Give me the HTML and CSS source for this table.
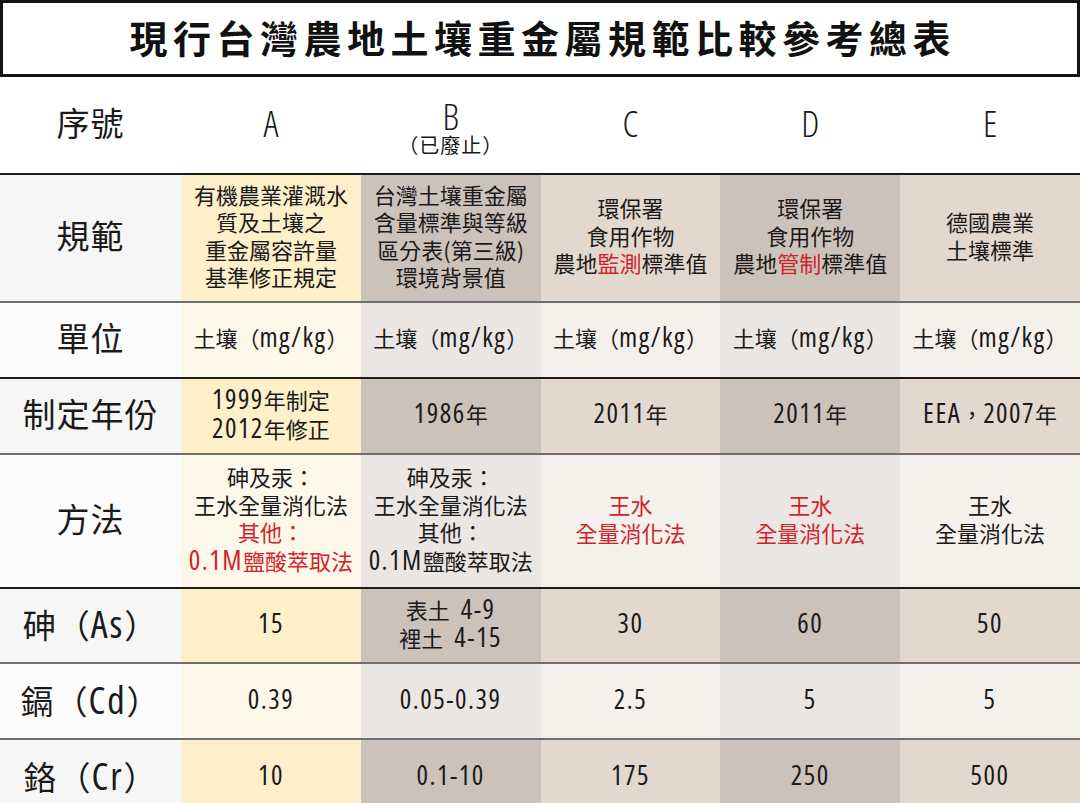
FILE: index.html
```html
<!DOCTYPE html>
<html lang="zh-Hant">
<head>
<meta charset="utf-8">
<title>現行台灣農地土壤重金屬規範比較參考總表</title>
<link rel="stylesheet" href="styles.css">
</head>
<body>
<div class="page">
  <h1 class="title">現行台灣農地土壤重金屬規範比較參考總表</h1>

  <div class="table">
    <div class="row head">
      <div class="cell label"><p class="txt">序號</p></div>
      <div class="cell col-a"><span class="letter">A</span></div>
      <div class="cell col-b stack"><span class="letter">B</span><span class="note">（已廢止）</span></div>
      <div class="cell col-c"><span class="letter">C</span></div>
      <div class="cell col-d"><span class="letter">D</span></div>
      <div class="cell col-e"><span class="letter">E</span></div>
    </div>

    <div class="row shade line-dark r-spec">
      <div class="cell label"><p class="txt">規範</p></div>
      <div class="cell col-a"><p class="txt">有機農業灌溉水<br>質及土壤之<br>重金屬容許量<br>基準修正規定</p></div>
      <div class="cell col-b"><p class="txt">台灣土壤重金屬<br>含量標準與等級<br>區分表(第三級)<br>環境背景值</p></div>
      <div class="cell col-c"><p class="txt">環保署<br>食用作物<br>農地<span class="red">監測</span>標準值</p></div>
      <div class="cell col-d"><p class="txt">環保署<br>食用作物<br>農地<span class="red">管制</span>標準值</p></div>
      <div class="cell col-e"><p class="txt">德國農業<br>土壤標準</p></div>
    </div>

    <div class="row light line-gray r-unit">
      <div class="cell label"><p class="txt">單位</p></div>
      <div class="cell col-a"><p class="txt">土壤（<span class="lat">mg/kg</span>）</p></div>
      <div class="cell col-b"><p class="txt">土壤（<span class="lat">mg/kg</span>）</p></div>
      <div class="cell col-c"><p class="txt">土壤（<span class="lat">mg/kg</span>）</p></div>
      <div class="cell col-d"><p class="txt">土壤（<span class="lat">mg/kg</span>）</p></div>
      <div class="cell col-e"><p class="txt">土壤（<span class="lat">mg/kg</span>）</p></div>
    </div>

    <div class="row shade line-dark r-year">
      <div class="cell label"><p class="txt">制定年份</p></div>
      <div class="cell col-a"><p class="txt"><span class="lat">1999</span>年制定<br><span class="lat">2012</span>年修正</p></div>
      <div class="cell col-b"><p class="txt"><span class="lat">1986</span>年</p></div>
      <div class="cell col-c"><p class="txt"><span class="lat">2011</span>年</p></div>
      <div class="cell col-d"><p class="txt"><span class="lat">2011</span>年</p></div>
      <div class="cell col-e"><p class="txt"><span class="lat">EEA</span>，<span class="lat">2007</span>年</p></div>
    </div>

    <div class="row light line-gray r-method">
      <div class="cell label"><p class="txt">方法</p></div>
      <div class="cell col-a"><p class="txt">砷及汞：<br>王水全量消化法<br><span class="red">其他：<br><span class="lat">0.1M</span>鹽酸萃取法</span></p></div>
      <div class="cell col-b"><p class="txt">砷及汞：<br>王水全量消化法<br>其他：<br><span class="lat">0.1M</span>鹽酸萃取法</p></div>
      <div class="cell col-c"><p class="txt red">王水<br>全量消化法</p></div>
      <div class="cell col-d"><p class="txt red">王水<br>全量消化法</p></div>
      <div class="cell col-e"><p class="txt">王水<br>全量消化法</p></div>
    </div>

    <div class="row shade line-dark r-as">
      <div class="cell label"><p class="txt">砷（<span class="lat2">As</span>）</p></div>
      <div class="cell col-a"><p class="txt lat">15</p></div>
      <div class="cell col-b"><p class="txt">表土&ensp;<span class="lat">4-9</span><br>裡土&ensp;<span class="lat">4-15</span></p></div>
      <div class="cell col-c"><p class="txt lat">30</p></div>
      <div class="cell col-d"><p class="txt lat">60</p></div>
      <div class="cell col-e"><p class="txt lat">50</p></div>
    </div>

    <div class="row light line-gray r-cd">
      <div class="cell label"><p class="txt">鎘（<span class="lat2">Cd</span>）</p></div>
      <div class="cell col-a"><p class="txt lat">0.39</p></div>
      <div class="cell col-b"><p class="txt lat">0.05-0.39</p></div>
      <div class="cell col-c"><p class="txt lat">2.5</p></div>
      <div class="cell col-d"><p class="txt lat">5</p></div>
      <div class="cell col-e"><p class="txt lat">5</p></div>
    </div>

    <div class="row shade line-gray r-cr">
      <div class="cell label"><p class="txt">鉻（<span class="lat2">Cr</span>）</p></div>
      <div class="cell col-a"><p class="txt lat">10</p></div>
      <div class="cell col-b"><p class="txt lat">0.1-10</p></div>
      <div class="cell col-c"><p class="txt lat">175</p></div>
      <div class="cell col-d"><p class="txt lat">250</p></div>
      <div class="cell col-e"><p class="txt lat">500</p></div>
    </div>
  </div>
</div>
</body>
</html>
```

FILE: styles.css
```css
html, body {
  margin: 0;
  padding: 0;
  overflow: hidden;
  background: #ffffff;
}

body {
  font-family: "Noto Sans CJK TC", "Noto Sans CJK JP", sans-serif;
  color: #1a1a1a;
}

.page {
  width: 1080px;
}

.title {
  box-sizing: border-box;
  height: 77px;
  margin: 0;
  padding-bottom: 3px;
  border: 3px solid #141414;
  display: flex;
  align-items: center;
  justify-content: center;
  font-size: 38px;
  font-weight: 700;
  letter-spacing: 5.5px;
  text-indent: 5.5px;
  color: #111;
  line-height: 1;
}

.table {
  display: flex;
  flex-direction: column;
}

.row {
  box-sizing: border-box;
  display: grid;
  grid-template-columns: 181px repeat(5, 1fr);
}

.line-dark { border-top: 2px solid #1c1c1c; }
.line-gray { border-top: 2px solid #6f6f6f; }

.cell {
  box-sizing: border-box;
  display: flex;
  align-items: center;
  justify-content: center;
  padding-bottom: 5px;
  text-align: center;
  font-size: 22px;
  line-height: 27.5px;
}

.txt {
  margin: 0;
  white-space: nowrap;
}

/* narrow latin text in body cells */
.lat {
  font-family: "Open Sans", "Noto Sans CJK TC", sans-serif;
  font-stretch: 75%;
  font-size: 27px;
  letter-spacing: 1.5px;
}

.label {
  font-size: 33px;
  line-height: 1;
  letter-spacing: 1px;
}

/* narrow latin in row labels */
.lat2 {
  font-family: "Open Sans", "Noto Sans CJK TC", sans-serif;
  font-stretch: 75%;
  font-size: 38px;
  font-weight: 400;
  letter-spacing: 2px;
}

.head { height: 96px; background: #fff; }
.r-spec { height: 128px; }
.r-unit { height: 76px; }
.r-year { height: 76px; }
.r-method { height: 134px; }
.r-as { height: 75px; }
.r-cd { height: 76px; }
.r-cr { height: 76px; }

.stack {
  flex-direction: column;
}

.letter {
  font-family: "Open Sans", "Noto Sans CJK TC", sans-serif;
  font-stretch: 75%;
  font-size: 37px;
  line-height: 34px;
  font-weight: 300;
}

.head .col-b .letter { margin-top: 10px; }

.note {
  font-size: 20px;
  line-height: 24px;
  letter-spacing: 1px;
}

.red { color: #d1232c; }

/* column backgrounds */
.shade .label { background: #f6f6f6; }
.light .label { background: #fcfcfc; }
.shade .col-a { background: #fdefc9; }
.light .col-a { background: #fef8eb; }
.shade .col-b, .shade .col-d { background: #cbc2b9; }
.light .col-b, .light .col-d { background: #eae6e3; }
.shade .col-c, .shade .col-e { background: #e2d8cd; }
.light .col-c, .light .col-e { background: #f4f0eb; }
```
